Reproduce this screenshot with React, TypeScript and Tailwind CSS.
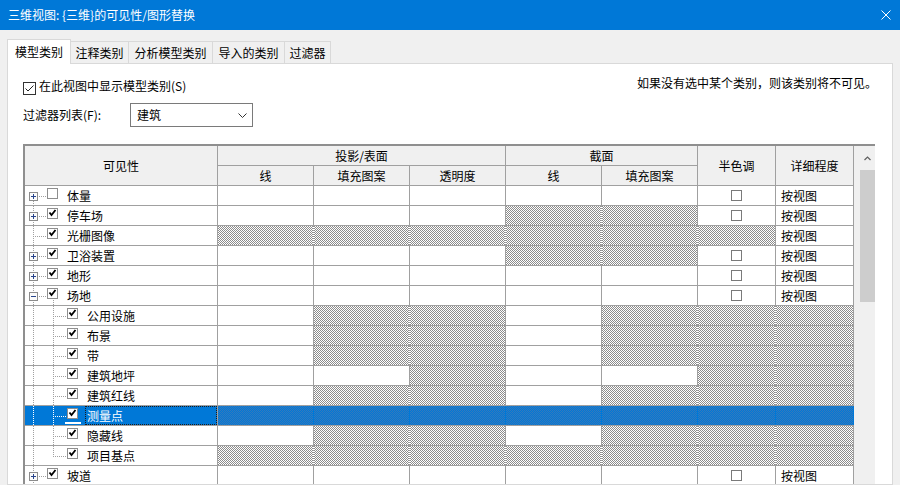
type Cell = 'w' | 'h' | 'c' | 't'

type Row = {
  name: string
  child?: boolean
  toggle?: '+' | '-'
  checked?: boolean
  selected?: boolean
  lastChild?: boolean
  cells: Cell[]
}

const PARENT: Cell[] = ['w', 'w', 'w', 'w', 'w', 'c', 't']
const SECTION_OFF: Cell[] = ['w', 'w', 'w', 'h', 'h', 'c', 't']
const SITE_CHILD: Cell[] = ['w', 'h', 'h', 'w', 'h', 'h', 'h']
const ALL_OFF: Cell[] = ['h', 'h', 'h', 'h', 'h', 'h', 'h']

const rows: Row[] = [
  { name: '体量', toggle: '+', cells: PARENT },
  { name: '停车场', toggle: '+', checked: true, cells: SECTION_OFF },
  { name: '光栅图像', checked: true, cells: ['h', 'h', 'h', 'h', 'h', 'h', 't'] },
  { name: '卫浴装置', toggle: '+', checked: true, cells: SECTION_OFF },
  { name: '地形', toggle: '+', checked: true, cells: PARENT },
  { name: '场地', toggle: '-', checked: true, cells: PARENT },
  { name: '公用设施', child: true, checked: true, cells: SITE_CHILD },
  { name: '布景', child: true, checked: true, cells: SITE_CHILD },
  { name: '带', child: true, checked: true, cells: SITE_CHILD },
  { name: '建筑地坪', child: true, checked: true, cells: ['w', 'w', 'h', 'w', 'w', 'h', 'h'] },
  { name: '建筑红线', child: true, checked: true, cells: SITE_CHILD },
  { name: '测量点', child: true, checked: true, selected: true, cells: ALL_OFF },
  { name: '隐藏线', child: true, checked: true, cells: SITE_CHILD },
  { name: '项目基点', child: true, checked: true, lastChild: true, cells: ALL_OFF },
  { name: '坡道', toggle: '+', checked: true, cells: PARENT },
]

const GRID = 'grid grid-cols-[193px_96px_96px_96px_96px_96px_78px_78px]'

// 1px checker fill, drawn with an svg pattern so the pixels stay crisp
function Hatch({ blue }: { blue?: boolean }) {
  return (
    <svg width="100%" height={19} className="block" shapeRendering="crispEdges">
      <rect width="100%" height={19} fill={blue ? 'url(#hatch-blue)' : 'url(#hatch)'} />
    </svg>
  )
}

function TreePrefix({ row, first }: { row: Row; first: boolean }) {
  const line = row.selected ? '#ffffff' : '#a0a0a0'
  const width = row.child ? 60 : 40
  const cx = row.child ? 42 : 22

  return (
    <svg width={width} height={19} className="shrink-0">
      <line x1={8.5} y1={first ? 15 : 0} x2={8.5} y2={19} stroke={line} strokeDasharray="1 1" />
      {row.child ? (
        <>
          <line x1={28.5} y1={0} x2={28.5} y2={row.lastChild ? 11 : 19} stroke={line} strokeDasharray="1 1" />
          <line x1={30} y1={10.5} x2={42} y2={10.5} stroke={line} strokeDasharray="1 1" />
        </>
      ) : (
        <line x1={row.toggle ? 14 : 10} y1={10.5} x2={22} y2={10.5} stroke={line} strokeDasharray="1 1" />
      )}
      {row.toggle === '-' && (
        <line x1={28.5} y1={14} x2={28.5} y2={19} stroke={line} strokeDasharray="1 1" />
      )}
      {row.toggle && (
        <g>
          <rect x={4.5} y={6.5} width={8} height={8} fill="#fbfbfb" stroke="#8c8c8c" />
          <line x1={6} y1={10.5} x2={11} y2={10.5} stroke="#27448c" />
          {row.toggle === '+' && <line x1={8.5} y1={8} x2={8.5} y2={13} stroke="#27448c" />}
        </g>
      )}
      <rect x={cx + 0.5} y={2.5} width={10} height={10} fill="#ffffff" stroke="#8e8e8e" />
      {row.checked && (
        <path
          d={`M${cx + 2.5} ${6.5} L${cx + 4.5} ${9} L${cx + 8.5} ${4}`}
          stroke="#000000"
          strokeWidth={1.8}
          fill="none"
        />
      )}
      {row.selected && <rect x={40} y={16} width={16} height={2} fill="#ffffff" />}
    </svg>
  )
}

function DataCell({ kind, next, selected }: { kind: Cell; next?: Cell; selected?: boolean }) {
  if (selected) {
    return (
      <div className="overflow-hidden border-r border-[#0078d7]">
        <Hatch blue />
      </div>
    )
  }
  if (kind === 'h') {
    return (
      <div className={`overflow-hidden border-r border-[#a0a0a0] ${next === 'h' ? 'border-dotted' : ''}`}>
        <Hatch />
      </div>
    )
  }
  if (kind === 'c') {
    return (
      <div className="flex items-center justify-center border-r border-[#a0a0a0] bg-white">
        <span className="h-[11px] w-[11px] border border-[#7a7a7a] bg-white" />
      </div>
    )
  }
  if (kind === 't') {
    return <div className="flex items-center border-r border-[#a0a0a0] bg-white pl-[5px]">按视图</div>
  }
  return <div className="border-r border-[#a0a0a0] bg-white" />
}

function HeaderCell({ children, className = '' }: { children: string; className?: string }) {
  return (
    <div className={`flex items-center justify-center border-r border-b border-[#a0a0a0] ${className}`}>
      {children}
    </div>
  )
}

export default function App() {
  return (
    <div className="flex h-[485px] w-[900px] flex-col overflow-hidden bg-[#f0f0f0] font-['Noto_Sans_CJK_SC','Noto_Sans',sans-serif] text-[12px] leading-none text-black">
      <svg width={0} height={0} className="block">
        <defs>
          <pattern id="hatch" width={2} height={2} patternUnits="userSpaceOnUse">
            <rect width={2} height={2} fill="#ffffff" />
            <rect width={1} height={1} fill="#8c8c8c" />
            <rect x={1} y={1} width={1} height={1} fill="#8c8c8c" />
          </pattern>
          <pattern id="hatch-blue" width={2} height={2} patternUnits="userSpaceOnUse">
            <rect width={2} height={2} fill="#0078d7" />
            <rect width={1} height={1} fill="#3579bb" />
            <rect x={1} y={1} width={1} height={1} fill="#3579bb" />
          </pattern>
        </defs>
      </svg>

      <div className="flex h-[30px] shrink-0 items-center justify-between bg-[#0078d7] pl-[8px] pr-[9px] text-white">
        <span>三维视图: {'{'}三维{'}'}的可见性/图形替换</span>
        <svg width={10} height={10} viewBox="0 0 10 10">
          <path d="M0.5 0.5 L9.5 9.5 M9.5 0.5 L0.5 9.5" stroke="#ffffff" strokeWidth={1} />
        </svg>
      </div>

      <div className="flex h-[33px] shrink-0 items-end pl-[7px]">
        <div className="relative z-10 -mb-px flex h-[25px] w-[64px] items-center justify-center border border-b-0 border-[#d9d9d9] bg-white">
          模型类别
        </div>
        <div className="flex h-[22px] w-[58px] items-center justify-center border-t border-r border-[#d9d9d9]">注释类别</div>
        <div className="flex h-[22px] w-[84px] items-center justify-center border-t border-r border-[#d9d9d9]">分析模型类别</div>
        <div className="flex h-[22px] w-[72px] items-center justify-center border-t border-r border-[#d9d9d9]">导入的类别</div>
        <div className="flex h-[22px] w-[46px] items-center justify-center border-t border-r border-[#d9d9d9]">过滤器</div>
      </div>

      <div className="mx-[7px] flex flex-1 flex-col overflow-hidden border border-[#d9d9d9] bg-white">
        <div className="mt-[14px] flex h-[18px] shrink-0 items-center justify-between pl-[15px] pr-[15px]">
          <div className="flex items-center gap-[3px]">
            <svg width={13} height={13} viewBox="0 0 13 13" className="mt-[2px]">
              <rect x={0.5} y={0.5} width={12} height={12} fill="#ffffff" stroke="#333333" />
              <path d="M2.5 6.5 L5 9 L10.5 3.5" stroke="#222222" strokeWidth={1} fill="none" />
            </svg>
            <span className="-mt-[3px]">在此视图中显示模型类别(S)</span>
          </div>
          <span className="-mt-[9px]">如果没有选中某个类别，则该类别将不可见。</span>
        </div>

        <div className="mt-[7px] flex h-[24px] shrink-0 items-center pl-[15px]">
          <span className="w-[107px]">过滤器列表(F):</span>
          <div className="flex h-[24px] w-[123px] items-center justify-between border border-[#7a7a7a] pl-[6px] pr-[5px]">
            <span>建筑</span>
            <svg width={9} height={5} viewBox="0 0 9 5">
              <path d="M0.5 0.5 L4.5 4.5 L8.5 0.5" stroke="#333333" fill="none" />
            </svg>
          </div>
        </div>

        <div className="ml-[15px] mt-[17px] flex w-[852px] shrink-0 border-t-2 border-l-2 border-[#8f8f8f]">
          <div className="flex w-[829px] flex-col">
            <div className={`${GRID} grid-rows-[20px_20px] bg-[#f0f0f0]`}>
              <HeaderCell className="row-span-2">可见性</HeaderCell>
              <HeaderCell className="col-span-3">投影/表面</HeaderCell>
              <HeaderCell className="col-span-2">截面</HeaderCell>
              <HeaderCell className="row-span-2">半色调</HeaderCell>
              <HeaderCell className="row-span-2">详细程度</HeaderCell>
              <HeaderCell>线</HeaderCell>
              <HeaderCell>填充图案</HeaderCell>
              <HeaderCell>透明度</HeaderCell>
              <HeaderCell>线</HeaderCell>
              <HeaderCell>填充图案</HeaderCell>
            </div>

            {rows.map((row, i) => (
              <div
                key={row.name}
                className={`${GRID} h-[20px] shrink-0 grid-rows-[19px] overflow-hidden border-b border-[#a0a0a0]`}
              >
                <div
                  className={`flex border-r border-[#a0a0a0] ${row.selected ? 'bg-[#0078d7] text-white' : 'bg-white'}`}
                >
                  <TreePrefix row={row} first={i === 0} />
                  <span
                    className={`flex flex-1 items-center border pl-px ${row.selected ? 'border-dotted border-[#1b1b1b]' : 'border-transparent'}`}
                  >
                    {row.name}
                  </span>
                </div>
                {row.cells.map((kind, j) => (
                  <DataCell key={j} kind={kind} next={row.cells[j + 1]} selected={row.selected} />
                ))}
              </div>
            ))}
          </div>

          <div className="flex w-[21px] flex-col bg-[#f0f0f0]">
            <div className="flex h-[24px] items-center justify-center pl-[6px]">
              <svg width={7} height={5} viewBox="0 0 7 5">
                <path d="M0.5 4 L3.5 1 L6.5 4" stroke="#606060" strokeWidth={1.2} fill="none" />
              </svg>
            </div>
            <div className="ml-[6px] h-[132px] w-[15px] bg-[#cdcdcd]" />
          </div>
        </div>
      </div>
    </div>
  )
}
